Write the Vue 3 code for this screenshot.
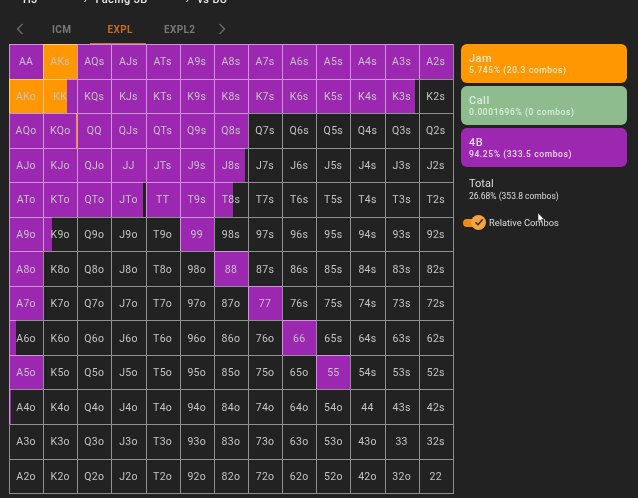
<template>
  <div class="page">
    <div class="crumbs">
      <span class="crumb first">HJ</span>
      <span class="sep second">›</span>
      <span class="crumb">Facing 3B</span>
      <span class="sep third">›</span>
      <span class="crumb">vs BU</span>
    </div>

    <div class="tabs">
      <svg class="arrow" width="8" height="12" viewBox="0 0 8 12"><path d="M6.5 1 L1.5 6 L6.5 11" /></svg>
      <span class="tab icm">ICM</span>
      <span class="tab active">EXPL</span>
      <span class="tab expl2">EXPL2</span>
      <svg class="arrow right" width="8" height="12" viewBox="0 0 8 12"><path d="M1.5 1 L6.5 6 L1.5 11" /></svg>
    </div>

    <div class="main">
      <div class="matrix">
        <div v-for="cell in cells" :key="cell.label" class="cell">
          <div class="fill">
            <div v-for="(part, i) in cell.parts" :key="i" :style="{ width: part[1] + '%', background: part[0] }"></div>
          </div>
          <span class="label">{{ cell.label }}</span>
        </div>
      </div>

      <div class="side">
        <div class="action jam">
          <div class="name">Jam</div>
          <div class="stat">5.745% (20.3 combos)</div>
        </div>
        <div class="action call">
          <div class="name">Call</div>
          <div class="stat">0.0001696% (0 combos)</div>
        </div>
        <div class="action fourb">
          <div class="name">4B</div>
          <div class="stat">94.25% (333.5 combos)</div>
        </div>

        <div class="total">
          <div class="total-name">Total</div>
          <div class="total-stat">26.68% (353.8 combos)</div>
        </div>

        <div class="relative">
          <div class="switch">
            <div class="knob">
              <svg width="10" height="10" viewBox="0 0 10 10"><path d="M1.5 5.2 L4 7.8 L8.7 2.2" /></svg>
            </div>
          </div>
          <span>Relative Combos</span>
        </div>
      </div>
    </div>

    <svg class="cursor" width="8" height="11" viewBox="0 0 9 13"><path d="M1 0 L1 10 L3.4 8 L5 12 L6.6 11.3 L5 7.6 L8 7.4 Z" /></svg>
  </div>
</template>

<script setup>
const ranks = ['A', 'K', 'Q', 'J', 'T', '9', '8', '7', '6', '5', '4', '3', '2']
const ORANGE = '#ff9800'
const PURPLE = '#9c27b0'

// hands that are not a plain 100% 4B or plain fold
const mixed = {
  AKs: [[ORANGE, 100]],
  AKo: [[ORANGE, 100]],
  KK: [[ORANGE, 69], [PURPLE, 31]],
  K3s: [[PURPLE, 90]],
  KQo: [[PURPLE, 97], [ORANGE, 3]],
  J8s: [[PURPLE, 91]],
  JTo: [[PURPLE, 92]],
  T8s: [[PURPLE, 56]],
  K9o: [[PURPLE, 25]],
  A6o: [[PURPLE, 20]],
  A4o: [[PURPLE, 7]]
}

const isFourBet = (row, col) => {
  if (row === col) return row <= 9
  const high = Math.min(row, col)
  const low = Math.max(row, col)
  if (row < col) {
    if (high === 0) return true
    if (high === 1) return low <= 11
    if (high === 2) return low <= 6
    if (high === 3) return low <= 5
    if (high === 4) return low <= 5
    return false
  }
  if (high === 0) return low <= 9
  if (high <= 3) return low <= 4
  return false
}

const cells = []
ranks.forEach((r, row) => {
  ranks.forEach((c, col) => {
    let label = r + c
    if (row < col) label = r + c + 's'
    if (row > col) label = c + r + 'o'
    let parts = []
    if (mixed[label]) parts = mixed[label]
    else if (isFourBet(row, col)) parts = [[PURPLE, 100]]
    cells.push({ label, parts })
  })
})
</script>

<style scoped>
.page {
  position: relative;
  width: 638px;
  height: 498px;
  overflow: hidden;
  background: #222222;
  font-family: Roboto, "Liberation Sans", sans-serif;
  filter: blur(0.35px);
}

.crumbs {
  display: flex;
  height: 8px;
  color: #e8e8e8;
  font-size: 11px;
  font-weight: 500;
  line-height: 1;
  margin-top: -6px;
  letter-spacing: 0.4px;
}

.crumb.first {
  margin-left: 23px;
}

.sep {
  margin-right: 8px;
}

.sep.second {
  margin-left: 46px;
}

.sep.third {
  margin-left: 38px;
}

.tabs {
  display: flex;
  align-items: center;
  height: 30px;
  margin-top: 12px;
  padding-left: 16px;
  font-size: 10px;
  font-weight: 700;
  letter-spacing: 0.4px;
  color: #787878;
}

.arrow path {
  fill: none;
  stroke: #666666;
  stroke-width: 1.5;
}

.tab {
  display: block;
}

.tab.icm {
  margin-left: 28px;
}

.tab.active {
  margin-left: 36px;
  color: #c46a24;
}

.tab.expl2 {
  margin-left: 31px;
}

.arrow.right {
  margin-left: 23px;
}

.main {
  display: flex;
  padding-left: 9px;
}

.matrix {
  display: grid;
  grid-template-columns: repeat(13, 34.15px);
  grid-template-rows: repeat(13, 34.55px);
  width: 445px;
  border-right: 1px solid #8f8f8f;
  border-bottom: 1px solid #8f8f8f;
  box-sizing: border-box;
  height: 450px;
}

.cell {
  position: relative;
  display: flex;
  align-items: center;
  justify-content: center;
  box-sizing: border-box;
  color: #c4c4c4;
  font-size: 10.5px;
  letter-spacing: 0.3px;
  padding-top: 1px;
}

.cell::after {
  content: "";
  position: absolute;
  inset: 0;
  border-top: 1px solid rgba(255, 255, 255, 0.5);
  border-left: 1px solid rgba(255, 255, 255, 0.5);
}

.fill {
  position: absolute;
  inset: 0;
  display: flex;
}

.label {
  position: relative;
}

.side {
  display: flex;
  flex-direction: column;
  width: 166px;
  margin-left: 7px;
}

.action {
  box-sizing: border-box;
  height: 39px;
  margin-bottom: 3px;
  padding: 9px 8px 0;
  border-radius: 6px;
  color: #f3e7d0;
  font-weight: 500;
}

.name {
  font-size: 11px;
  line-height: 12px;
  letter-spacing: 0.5px;
}

.stat {
  font-size: 8.5px;
  line-height: 11px;
  letter-spacing: 0.6px;
}

.jam {
  background: #ff9800;
}

.call {
  background: #8fbc8f;
  color: #dcebdc;
}

.fourb {
  background: #9c27b0;
  color: #eed9f2;
}

.total {
  padding: 7px 8px 0;
  color: #dddddd;
}

.total-name {
  font-size: 11px;
  line-height: 14px;
}

.total-stat {
  font-size: 8.5px;
  line-height: 11px;
}

.relative {
  display: flex;
  align-items: center;
  margin-top: 15px;
  color: #dddddd;
  font-size: 9.3px;
}

.relative span {
  margin-left: 5px;
}

.switch {
  position: relative;
  width: 21px;
  height: 8px;
  margin-left: 2px;
  border-radius: 4px;
  background: #f08a14;
}

.knob {
  position: absolute;
  top: -4px;
  right: -2px;
  display: flex;
  align-items: center;
  justify-content: center;
  width: 15px;
  height: 15px;
  border-radius: 50%;
  background: #f2a544;
}

.knob path {
  fill: none;
  stroke: #3a2a14;
  stroke-width: 1.4;
}

.cursor {
  position: absolute;
  left: 537px;
  top: 213px;
}

.cursor path {
  fill: #ffffff;
  stroke: #222222;
  stroke-width: 0.5;
}

.tab.active::after {
  content: "";
  position: absolute;
  left: 90px;
  top: 43px;
  width: 56px;
  height: 1.5px;
  background: #c4764a;
}
</style>
